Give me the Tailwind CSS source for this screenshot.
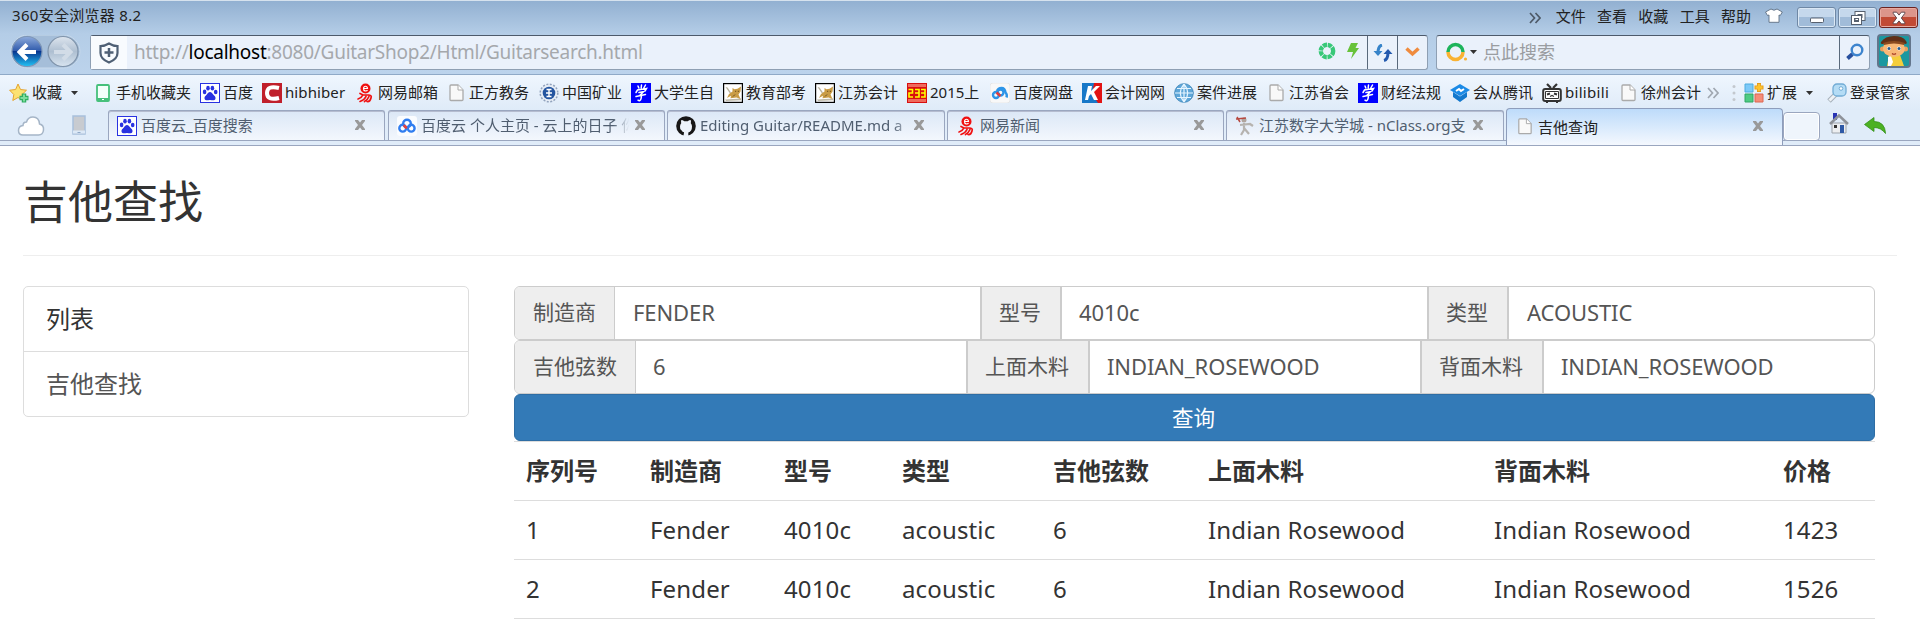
<!DOCTYPE html>
<html lang="zh-CN">
<head>
<meta charset="utf-8">
<title>吉他查询</title>
<script src="https://cdn.jsdelivr.net/npm/@tailwindcss/browser@4"></script>
</head>
<body class="h-[625px] w-[1920px] overflow-hidden bg-white font-['Noto_Sans','Noto_Sans_CJK_SC',sans-serif] text-[#333]">
<svg class="hidden">
  <symbol id="paw" viewBox="0 0 20 20"><path fill="#2932e1" d="M0 0h20v20H0z"/><path fill="#fff" d="M1 1h18v18H1z"/><g fill="#2932e1"><ellipse cx="4.6" cy="8.9" rx="1.8" ry="2.3"/><ellipse cx="8" cy="5.2" rx="1.8" ry="2.4"/><ellipse cx="12.4" cy="5.2" rx="1.8" ry="2.4"/><ellipse cx="15.7" cy="9" rx="1.8" ry="2.3"/><path d="M10 9c1.500 0 2 1.200 3.200 2.500s2.600 2 2.300 3.900c-.4 2-2.300 2.100-3.700 1.800a8 8 0 0 0-3.600 0c-1.500.3-3.300.1-3.700-1.800-.3-1.900 1.200-2.600 2.300-3.900S8.500 9 10 9z"/></g></symbol>
  <symbol id="doc" viewBox="0 0 20 20"><path fill="#f9f9f9" stroke="#aaa" stroke-width="1.300" d="M4 3q0-1 1-1h7l5 5v9.500q0 1-1 1H5q-1 0-1-1z"/><path fill="#fff" stroke="#aaa" d="M12 2v5h5"/></symbol>
  <symbol id="yi" viewBox="0 0 20 20"><circle cx="10.500" cy="5.500" r="5" fill="#f01010"/><path stroke="#fff" stroke-width="1.200" fill="none" d="M8.500 5.500h4c0-3-4-3-4 0s3 3 4 1.500"/><path d="M5 10.500l3 1.500h6q3 .3 2 3-1 4-4 3.500M7.500 12.500q-1 2.500-4.500 3.500M11 13.500q-1.500 3.500-6 5M14 13.500q-1.500 3.500-4.500 5" stroke="#f01010" stroke-width="1.700" fill="none" stroke-linecap="round"/></symbol>
  <symbol id="xue" viewBox="0 0 20 20"><path fill="#00f" d="M0 0h20v20H0z"/><path stroke="#fff" stroke-width="1.500" fill="none" stroke-linecap="round" d="M7 3l.8 2M10.500 2l-.3 3M14.500 2l-2 3.500M5 9.500l1.500-2.500 9-1.500-1.500 2.500M8 9.500l4.500-.8-3 3q1.500 1 .5 4-1 3-3 1.500M5 13.500l9.500-2"/></symbol>
  <symbol id="cat" viewBox="0 0 20 20"><path fill="#000" d="M0 0h20v20H0z"/><path fill="#fff" d="M1.200 1.200h17.600v17.600H1.200z"/><path fill="#bdb9a8" d="M2 16.500l16-1v1.800L3 18z"/><path fill="#b8b39f" d="M2.500 4l2 .5 3.500 5-1 1z"/><path fill="#c99c45" d="M9.500 5l2 1.200 3-.4L18 3.500l-.5 5-2 3 2 4.500-4-1.500-6 .8.5-2.500L4 15l2-4 3.500-2.500z"/><path stroke="#6b4e1e" d="M12 8.300h1.200m1.600 0H16M10 13.500l2-2" fill="none"/></symbol>
  <symbol id="cloudpan" viewBox="0 0 20 20"><rect width="20" height="20" rx="3" fill="#fafcff"/><g fill="none" stroke-width="2.400"><circle cx="10" cy="7.500" r="3.800" stroke="#2f7df0"/><circle cx="5.700" cy="12.200" r="3.400" stroke="#2f7df0"/><circle cx="14.200" cy="12.200" r="3.400" stroke="#2f7df0"/></g><path stroke="#e8413c" stroke-width="2.600" stroke-linecap="round" d="M7.500 10l1.500 1.500"/></symbol>
  <symbol id="close" viewBox="0 0 12 12"><path d="M1 1h3l2 2.500L8 1h3v1L8 6l3 4v1H8L6 8.500 4 11H1v-1l3-4-3-4z" fill="#999"/></symbol>
</svg>

<!-- browser chrome -->
<div class="flex h-[146px] flex-col bg-[#e0ecf9]">
  <div class="h-[74px] border-t border-[#d6e2ee] bg-linear-to-b from-[#92b0d1] via-[#b4cde7] via-45% to-[#bcd3ec]">
    <div class="flex h-[34px] justify-between text-[15px] leading-[15px] whitespace-nowrap text-[#222]">
      <div class="pt-[7px] pl-[12px] tracking-[0.3px]">360安全浏览器 8.2</div>
      <div class="flex pr-[2px]">
        <svg class="mt-[11px] mr-[15px] h-3 w-3" viewBox="0 0 12 12" fill="none" stroke="#4e5a68" stroke-width="1.700"><path d="M1 1l4.500 5L1 11M6.500 1L11 6l-4.500 5"/></svg>
        <div class="flex gap-[11.300px] pt-[8px]"><span>文件</span><span>查看</span><span>收藏</span><span>工具</span><span>帮助</span></div>
        <svg class="mt-[7px] ml-[14px] h-[15px] w-[18px]" viewBox="0 0 18 15"><path fill="#fff" stroke="#5d6f83" stroke-width=".9" d="M6 1q3 2.500 6 0l5.300 3-2 3.500L14 7v7.300H4V7l-1.500.5-2-3.500z"/></svg>
        <div class="mt-[6px] ml-[14px] flex h-[21px] gap-[2px]">
          <div class="grid w-[39px] place-items-center rounded-[3px] border border-[#6f88a5] bg-linear-to-b from-[#c5d8ec] from-50% to-[#a1bcd9] to-50% shadow-[inset_0_0_0_1px_#dbe8f5]"><svg class="h-4 w-4" viewBox="0 0 16 16"><rect x="1.500" y="8" width="13" height="4.500" rx="1" fill="#fff" stroke="#56606e"/></svg></div>
          <div class="grid w-[39px] place-items-center rounded-[3px] border border-[#6f88a5] bg-linear-to-b from-[#c5d8ec] from-50% to-[#a1bcd9] to-50% shadow-[inset_0_0_0_1px_#dbe8f5]"><svg class="h-4 w-4" viewBox="0 0 16 16" fill="none"><path stroke="#56606e" stroke-width="4" d="M6.500 3h7v6h-7z"/><path stroke="#fff" stroke-width="2" d="M6.500 3h7v6h-7z"/><path stroke="#56606e" stroke-width="4" d="M3 7h7v6H3z"/><path stroke="#fff" stroke-width="2" d="M3 7h7v6H3z"/></svg></div>
          <div class="grid w-[39px] place-items-center rounded-[3px] border border-[#6b2320] bg-linear-to-b from-[#dc958b] from-50% to-[#c14a35] to-50% shadow-[inset_0_0_0_1px_#e8aaa0]"><svg class="h-[14px] w-[14px]" viewBox="0 0 12 12"><path d="M1 1h3l2 2.500L8 1h3v1L8 6l3 4v1H8L6 8.500 4 11H1v-1l3-4-3-4z" fill="#fff" stroke="#584349" stroke-width=".8"/></svg></div>
        </div>
      </div>
    </div>
    <div class="flex h-[35px]">
      <svg class="h-[35px] w-[90px]" viewBox="0 0 90 35"><defs><linearGradient id="bl" x2="0" y2="1"><stop stop-color="#8eabdc"/><stop offset=".48" stop-color="#2f5aab"/><stop offset=".5" stop-color="#07358e"/><stop offset="1" stop-color="#22c3f5"/></linearGradient><linearGradient id="gr" x2="0" y2="1"><stop stop-color="#dde5ee"/><stop offset=".5" stop-color="#aebfd1"/><stop offset="1" stop-color="#d8e4f0"/></linearGradient></defs>
        <rect x="11" y="0" width="69" height="33" rx="16.500" fill="#a5bed9" stroke="#c8daec"/><circle cx="27" cy="16.500" r="15" fill="url(#bl)" stroke="#7d95b6" stroke-width="1.200"/><circle cx="63" cy="16.500" r="15" fill="url(#gr)" stroke="#7f93aa" stroke-width="1.200"/><path stroke="#fff" stroke-width="4" fill="none" d="M36 17H20m7-7.500L19.500 17l7.500 7.500"/><path stroke="#d2dce7" stroke-width="4" fill="none" d="M54 17h16m-7-7.500l7.500 7.500-7.500 7.500"/></svg>
      <div class="flex w-[1338px] rounded-[3px] border border-[#8e9fb3] border-t-[#4d5a6b] bg-[#eaf1fb]">
        <div class="grid w-[36px] place-items-center bg-[#f8fbfe]"><svg class="h-[22px] w-[22px]" viewBox="0 0 22 22" fill="none" stroke="#4f6075" stroke-width="2.200"><path d="M11 1.500q4 2.500 8.500 2.500v7q0 6-8.500 9.500Q2.500 17 2.500 11V4Q7 4 11 1.500z"/><path stroke-width="2.500" d="M11 6v9m-4.500-4.500h9"/></svg></div>
        <div class="grow pl-[7px] text-[19px] leading-[33px] tracking-[-0.26px] whitespace-nowrap text-[#a5a8ac]">http://<span class="text-black">localhost</span>:8080/GuitarShop2/Html/Guitarsearch.html</div>
        <svg class="mt-[6px] h-[18px] w-[18px]" viewBox="0 0 18 18"><circle cx="9" cy="9" r="6.200" fill="none" stroke="#38c878" stroke-width="4.400" stroke-dasharray="4.100 .77"/></svg>
        <svg class="mt-[6px] ml-[10px] h-[18px] w-[14px]" viewBox="0 0 14 18"><path fill="#67c23a" d="M5 1h7L9.500 6H13L5 17l2-7H1z"/></svg>
        <div class="ml-[7px] grid w-[30px] place-items-center border-l border-[#59697b]"><svg class="h-[18px] w-[20px]" viewBox="0 0 20 18"><path fill="none" stroke="#3683c9" stroke-width="3" d="M9 1Q5 2 5 9"/><path fill="#3683c9" d="M.5 7h9L5 12z"/><path fill="none" stroke="#2359ae" stroke-width="3" d="M11 16.500q4-1 4-8"/><path fill="#2359ae" d="M10.500 10h9L15 5z"/></svg></div>
        <div class="grid w-[30px] place-items-center border-l border-[#59697b]"><svg class="-mt-[2px] h-[10px] w-[15px]" viewBox="0 0 15 10"><path fill="none" stroke="#ef8b3e" stroke-width="3.500" d="M1.500 1.500l6 5.500 6-5.500"/></svg></div>
      </div>
      <div class="ml-[8px] flex w-[434px] rounded-[3px] border border-[#8e9fb3] border-t-[#4d5a6b] bg-[#eaf1fb]">
        <svg class="mt-[6px] ml-[9px] h-[20px] w-[22px]" viewBox="0 0 22 20" fill="none" stroke-width="3.500"><path stroke="#1db45b" d="M2 10a7.500 7.500 0 0 1 15 0"/><path stroke="#f9b233" d="M17 10a7.500 7.500 0 0 1-15 0"/><circle cx="19.500" cy="17" r="1.600" fill="#f9b233" stroke="none"/></svg>
        <svg class="mt-[14px] ml-[2px] h-[4px] w-[7px]" viewBox="0 0 7 4"><path d="M0 0h7L3.500 4z" fill="#333"/></svg>
        <div class="grow pl-[6px] text-[18px] leading-[32px] text-[#9a9da1]">点此搜索</div>
        <div class="grid w-[30px] place-items-center border-l border-[#59697b]"><svg class="-mt-[2px] h-[18px] w-[18px]" viewBox="0 0 18 18" fill="none"><path stroke="#274f9e" stroke-width="4" d="M1.500 15.500l5-4.500"/><circle cx="11" cy="7" r="5.300" stroke="#3d84ce" stroke-width="2.400"/></svg></div>
      </div>
      <svg class="-mt-px ml-[7px] h-[34px] w-[34px]" viewBox="0 0 34 34"><rect x="1" y="1" width="32" height="32" rx="3" fill="#1b98a0" stroke="#63758b" stroke-width="2"/><path fill="#f4ce3c" d="M10 32l2-11h11l4 11z"/><path fill="#fff" d="M11 23l3-1 2 6-2 4h-3z"/><circle cx="5.500" cy="15" r="2.500" fill="#e9a05e"/><circle cx="28.500" cy="15" r="2.500" fill="#e9a05e"/><ellipse cx="17" cy="14.500" rx="11" ry="8.500" fill="#f8b877"/><path fill="#613018" d="M4 8Q8 2 17 2t12 5q2 3-1 3-10-4-22 0-3 0-2-2z"/><path fill="#8a4a20" d="M6 9q11-4 22 0l-1 2q-10-3-20 0z"/><circle cx="12" cy="14.500" r="2" fill="#fff"/><circle cx="22" cy="14.500" r="2" fill="#fff"/><circle cx="12" cy="14.500" r="1.500" fill="#245b92"/><circle cx="22" cy="14.500" r="1.500" fill="#245b92"/><path stroke="#a43720" stroke-width="1.200" d="M15 19.500q2 1.500 4 0" fill="none"/></svg>
    </div>
  </div>

  <!-- bookmarks -->
  <div class="flex h-[36px] items-center border-t border-[#8fa9c7] bg-linear-to-b from-[#eff6fe] to-[#dfebf8] pl-[9px] text-[15px] leading-[19px] whitespace-nowrap text-[#222]">
    <div class="flex w-[84px] gap-[3px]"><svg class="h-5 w-5" viewBox="0 0 20 20"><path fill="#fce272" stroke="#e5a431" d="M9 1l2.500 5.500 6 .7-4.300 4.200 1 6L9 14.500 3.800 17.500l1-6L.6 7.200l6-.7z"/><path stroke="#2fae60" stroke-width="4.500" d="M15 10.500v9M10.500 15h9"/><path stroke="#7ddc9c" stroke-width="2" d="M15 11.500v7M11.500 15h7"/></svg><span>收藏</span><svg class="mt-[8px] ml-[6px] h-[4px] w-[7px]" viewBox="0 0 7 4"><path d="M0 0h7L3.500 4z" fill="#333"/></svg></div>
    <div class="flex w-[107px] gap-[3px]"><svg class="h-5 w-5" viewBox="0 0 20 20"><rect x="4" y="2" width="12" height="16" rx="1" fill="#f4fffa" stroke="#46c07b" stroke-width="1.800"/><path stroke="#46c07b" stroke-width="3" d="M4 16.500h12"/><path stroke="#fff" d="M9 16.500h2"/></svg><span>手机收藏夹</span></div>
    <div class="flex w-[62px] gap-[3px]"><svg class="h-5 w-5"><use href="#paw"/></svg><span>百度</span></div>
    <div class="flex w-[93px] gap-[3px]"><svg class="h-5 w-5" viewBox="0 0 20 20"><path fill="#c01f2b" d="M0 0h20v20H0z"/><path fill="none" stroke="#fff" stroke-width="4" d="M17 5Q5 2 5 10t12 5"/></svg><span class="tracking-[0.1px]">hibhiber</span></div>
    <div class="flex w-[91px] gap-[3px]"><svg class="h-5 w-5"><use href="#yi"/></svg><span>网易邮箱</span></div>
    <div class="flex w-[93px] gap-[3px]"><svg class="h-5 w-5"><use href="#doc"/></svg><span>正方教务</span></div>
    <div class="flex w-[92px] gap-[3px]"><svg class="h-5 w-5" viewBox="0 0 20 20"><circle cx="10" cy="10" r="8.800" fill="#e8eef6" stroke="#92a3bd" stroke-width="1.500" stroke-dasharray="2 1.500"/><circle cx="10" cy="10" r="6.300" fill="#2455a0"/><path stroke="#fff" stroke-width="1.400" d="M7.500 6.500h5M10 6.500v7M7 10h6M7.500 13.500h5"/></svg><span>中国矿业</span></div>
    <div class="flex w-[92px] gap-[3px]"><svg class="h-5 w-5"><use href="#xue"/></svg><span>大学生自</span></div>
    <div class="flex w-[92px] gap-[3px]"><svg class="h-5 w-5"><use href="#cat"/></svg><span>教育部考</span></div>
    <div class="flex w-[92px] gap-[3px]"><svg class="h-5 w-5"><use href="#cat"/></svg><span>江苏会计</span></div>
    <div class="flex w-[83px] gap-[3px]"><svg class="h-5 w-5" viewBox="0 0 20 20"><path fill="#d80f0f" d="M0 0h20v20H0z"/><path fill="#ef6a5c" d="M1 1h18v3H1zM1 16h18v3H1z"/><path fill="none" stroke="#ff0" stroke-width="1.600" d="M1.500 6.500h4v3.500h-3.500v4h4M8 6.500h4v7.500H8m0-4h4M14 6.500h4v7.500h-4m0-4h4"/></svg><span>2015上</span></div>
    <div class="flex w-[92px] gap-[3px]"><svg class="h-5 w-5" viewBox="0 0 20 20"><rect width="20" height="20" rx="3" fill="#f8f8f8" stroke="#ddd" stroke-width=".6"/><g fill="none" stroke-width="2.400"><circle cx="6" cy="12" r="3" stroke="#2d95e8"/><path stroke="#2d95e8" d="M7 8q1-3 4.500-3t4 4.500q2 2 1 5"/><circle cx="10.500" cy="9.500" r="3" stroke="#2d95e8"/><path stroke="#e33d3d" d="M6.500 9.500l4 3.500"/></g></svg><span>百度网盘</span></div>
    <div class="flex w-[92px] gap-[3px]"><svg class="h-5 w-5" viewBox="0 0 20 20"><path fill="#1878c8" d="M0 0h20v20H0z"/><path fill="#e21414" d="M12 0h8v20h-4l-6-9z"/><path fill="#fff" d="M6 3h4l-1 5 5-5h4l-6 6 4 8h-4l-3-6-2 2-1 4H3z"/></svg><span>会计网网</span></div>
    <div class="flex w-[92px] gap-[3px]"><svg class="h-5 w-5" viewBox="0 0 20 20"><circle cx="10" cy="10" r="9.300" fill="#5ea6d8" stroke="#478dbe"/><path fill="none" stroke="#e6f5ff" stroke-width="1.200" d="M10 1v18M1 10h18M3 5.500h14M3 14.500h14M10 1Q2.500 10 10 19M10 1q7.500 9 0 18"/></svg><span>案件进展</span></div>
    <div class="flex w-[92px] gap-[3px]"><svg class="h-5 w-5"><use href="#doc"/></svg><span>江苏省会</span></div>
    <div class="flex w-[92px] gap-[3px]"><svg class="h-5 w-5"><use href="#xue"/></svg><span>财经法规</span></div>
    <div class="flex w-[92px] gap-[3px]"><svg class="h-5 w-5" viewBox="0 0 20 20"><path fill="#1b8ae6" d="M10 1l10 6-10 6L0 7z"/><path fill="#1378cd" d="M3 9l7 4.500L17 9v5l-7 5-7-5z"/><path stroke="#fff" stroke-width="2" fill="none" d="M6 8l3-2 2 2 3-2"/></svg><span>会从腾讯</span></div>
    <div class="flex w-[76px] gap-[3px]"><svg class="h-5 w-5" viewBox="0 0 20 20" fill="none" stroke="#333"><rect x="1.200" y="6" width="17.600" height="12" rx="2" fill="#fff" stroke-width="2"/><path stroke-width="1" d="M3.500 8.500h13v7h-13z"/><path stroke-width="2.200" d="M5 1l4 4M15 1l-4 4"/><path stroke-width="2" d="M5 11.500l3-1M15 11.500l-3-1"/><path stroke-width="1.200" d="M8 13.500l2-1 2 1M4 19.500h2m8 0h2"/></svg><span class="tracking-[0.300px]">bilibili</span></div>
    <div class="flex w-[89px] gap-[3px]"><svg class="h-5 w-5"><use href="#doc"/></svg><span>徐州会计</span></div>
    <svg class="h-3 w-3" viewBox="0 0 12 12" fill="none" stroke="#a0a7b0" stroke-width="1.700"><path d="M1 1l4.500 5L1 11M6.500 1L11 6l-4.500 5"/></svg>
    <svg class="ml-[13px] h-[18px] w-[4px]" viewBox="0 0 4 18" fill="#c3c8ce"><circle cx="2" cy="2.500" r="1.500"/><circle cx="2" cy="9" r="1.500"/><circle cx="2" cy="15.500" r="1.500"/></svg>
    <div class="ml-[8px] flex w-[83px] gap-[3px]"><svg class="h-5 w-5" viewBox="0 0 20 20"><path fill="#7cc9f8" stroke="#4dacdf" d="M1 1h8v8H1z"/><path fill="#4ecb83" stroke="#31a765" d="M1 11h8v8H1z"/><path fill="#f58d78" stroke="#dc6652" d="M11 11h8v8h-8z"/><path stroke="#e59b1a" stroke-width="4" d="M15 0v9M10.500 4.500h9"/><path stroke="#fcc32f" stroke-width="2.500" d="M15 1v7M11.500 4.500h7"/></svg><span>扩展</span><svg class="mt-[8px] ml-[6px] h-[4px] w-[7px]" viewBox="0 0 7 4"><path d="M0 0h7L3.500 4z" fill="#333"/></svg></div>
    <div class="flex gap-[3px]"><svg class="h-5 w-5" viewBox="0 0 20 20"><path stroke="#a5b0ba" stroke-width="5" d="M2 18l7-7"/><path stroke="#eef2f5" stroke-width="3" d="M2.500 17.500l7-7"/><rect x="6" y="1" width="13" height="12" rx="4" fill="#b4dcf5" stroke="#72acd5" stroke-width="1.300"/><circle cx="14" cy="5.500" r="1.800" fill="#fff" stroke="#72acd5"/></svg><span>登录管家</span></div>
  </div>

  <!-- tabs -->
  <div class="flex h-[36px] border-b border-[#9aa6bf] text-[15px] whitespace-nowrap text-[#505e70]">
    <div class="flex h-[31px] w-[108px] gap-[27px] border-b border-[#9aa6bf] pl-[17px]">
      <svg class="mt-[5px] h-[22px] w-[28px] shrink-0" viewBox="0 0 28 22"><path fill="#fff" stroke="#a5b5c7" stroke-width="1.500" d="M6 20Q1.500 20 1.500 15.500T6 10.500Q6 7 9.500 7 11 2 16 2q6 0 6.500 7 4.500 1 4 6-.5 5-5 5z"/></svg>
      <svg class="mt-[5px] h-[20px] w-[14px] shrink-0" viewBox="0 0 14 20"><path fill="#c8cbd0" stroke="#a8c0dc" stroke-width="1.500" d="M1 1h12v18H1z"/><path stroke="#dce9f7" stroke-width="3" d="M1 17h12"/><path stroke="#8fa9c8" d="M5.500 17.500h3"/></svg>
    </div>
    <div class="flex h-[31px] grow border-b border-[#9aa6bf]">
      <div class="flex h-full w-[277px] items-center rounded-t-[3px] border border-b-0 border-[#9aa6bf] bg-linear-to-b from-[#dbe7f6] to-[#f3f7fd] pl-[8px] shadow-[inset_0_1px_0_#b5bccf]"><svg class="mr-[4px] h-5 w-5"><use href="#paw"/></svg><span class="w-[213px]">百度云_百度搜索</span><svg class="mb-px h-3 w-3"><use href="#close"/></svg></div>
      <div class="ml-[3px] flex h-full w-[277px] items-center rounded-t-[3px] border border-b-0 border-[#9aa6bf] bg-linear-to-b from-[#dbe7f6] to-[#f3f7fd] pl-[8px] shadow-[inset_0_1px_0_#b5bccf]"><svg class="mr-[4px] h-5 w-5"><use href="#cloudpan"/></svg><span class="mr-[3px] w-[210px] mask-r-from-[192px] mask-r-to-[208px]">百度云 个人主页 - 云上的日子 你</span><svg class="mb-px h-3 w-3 shrink-0"><use href="#close"/></svg></div>
      <div class="ml-[2px] flex h-full w-[278px] items-center rounded-t-[3px] border border-b-0 border-[#9aa6bf] bg-linear-to-b from-[#dbe7f6] to-[#f3f7fd] pl-[8px] shadow-[inset_0_1px_0_#b5bccf]"><svg class="mr-[4px] h-5 w-5" viewBox="0 0 20 20"><circle cx="10" cy="10" r="9.800" fill="#181717"/><path fill="#eef3fb" d="M7.700 20v-3.500Q4 15.500 4 10.500q0-2 1.200-3.200Q4.800 5.500 5.300 4q1.500 0 3 1.200h3.400Q13.200 4 14.700 4q.5 1.500.1 3.300Q16 8.500 16 10.500q0 5-3.700 6V20z"/><path stroke="#181717" stroke-width="1.500" fill="none" d="M3.500 14q1.500.3 2 1.600T8 17"/></svg><span class="mr-[3px] w-[210px] mask-r-from-[192px] mask-r-to-[215px]">Editing Guitar/README.md a</span><svg class="mb-px h-3 w-3 shrink-0"><use href="#close"/></svg></div>
      <div class="ml-[2px] flex h-full w-[277px] items-center rounded-t-[3px] border border-b-0 border-[#9aa6bf] bg-linear-to-b from-[#dbe7f6] to-[#f3f7fd] pl-[8px] shadow-[inset_0_1px_0_#b5bccf]"><svg class="mr-[4px] h-5 w-5"><use href="#yi"/></svg><span class="w-[213px]">网易新闻</span><svg class="mb-px h-3 w-3"><use href="#close"/></svg></div>
      <div class="ml-[2px] flex h-full w-[278px] items-center rounded-t-[3px] border border-b-0 border-[#9aa6bf] bg-linear-to-b from-[#dbe7f6] to-[#f3f7fd] pl-[8px] shadow-[inset_0_1px_0_#b5bccf]"><svg class="mr-[4px] h-5 w-5" viewBox="0 0 20 20" fill="none"><circle cx="9" cy="4" r="2.500" fill="#b0a59e"/><path stroke="#b74840" stroke-width="1.500" d="M1 3l10-1M2 1l3 5"/><path stroke="#b6b3af" stroke-width="2.200" d="M9 7v7l-3 5M9 12l5 6M5 9l10-1 3 2"/></svg><span class="mr-[3px] w-[210px]">江苏数字大学城 - nClass.org支</span><svg class="mb-px h-3 w-3 shrink-0"><use href="#close"/></svg></div>
      <div class="-mt-[2px] ml-[2px] flex h-[37px] w-[277px] rounded-t-[4px] border border-b-0 border-[#8e9dbb] bg-linear-to-b from-[#bddbfa] to-[#f4f8fe] pt-[6px] pl-[8px] text-[#222]"><svg class="mt-[2px] mr-[4px] h-[19px] w-[19px]"><use href="#doc"/></svg><span class="w-[214px] leading-[25px]">吉他查询</span><svg class="mt-[5px] h-3 w-3"><use href="#close"/></svg></div>
      <div class="mt-[2px] h-[29px] w-[37px] rounded-[4px] border border-[#9aa6bf] bg-[#eff5fc] shadow-[inset_0_0_0_1px_#fff]"></div>
      <svg class="mt-[3px] ml-[9px] h-[21px] w-[20px]" viewBox="0 0 20 21"><path fill="#2733b3" d="M4 0h4v7H4z"/><path fill="#eceef0" stroke="#9da3ab" d="M3 10h14v10H3z"/><path fill="none" stroke="#8e9299" stroke-width="2.500" d="M1 11l9-8.500L19 11"/><path fill="#2e59a6" d="M11 12h4v8h-4z"/><path fill="#333" d="M5 12h3v3H5z"/></svg>
      <svg class="mt-[7px] ml-[15px] h-[18px] w-[22px]" viewBox="0 0 22 18"><path fill="#4cb122" stroke="#34901a" stroke-width=".8" d="M.5 7.500L10 .500v4q11 0 11.500 12Q17 10.500 10 10.500v4z"/></svg>
    </div>
  </div>
</div>

<!-- page -->
<div class="pr-[23px] pl-[23px]">
  <h1 class="h-[110px] border-b border-[#eee] pt-[31px] text-[45px] leading-[50px] font-normal">吉他查找</h1>
  <div class="flex pt-[30px]">
    <div class="mr-[45px] h-[131px] w-[446px] rounded-[5px] border border-[#ddd] pl-[22px] text-[24px]">
      <div class="-ml-[22px] h-[65px] border-b border-[#ddd] pl-[22px] leading-[64px]">列表</div>
      <div class="leading-[64px] text-[#555]">吉他查找</div>
    </div>
    <div class="w-[1361px]">
      <div class="flex h-[54px] overflow-hidden rounded-[6px] border border-[#ccc] text-[21px] leading-[50px] text-[#555]">
        <div class="w-[100px] border-r border-[#ccc] bg-[#eee] pl-[18px]">制造商</div><div class="w-[365px] pl-[18px] text-[22px] tracking-[-0.1px]">FENDER</div>
        <div class="w-[82px] border-x-2 border-[#ccc] bg-[#eee] pl-[17px]">型号</div><div class="w-[365px] pl-[17px] text-[22px] tracking-[-0.1px]">4010c</div>
        <div class="w-[82px] border-x-2 border-[#ccc] bg-[#eee] pl-[17px]">类型</div><div class="pl-[18px] text-[22px] tracking-[-0.1px]">ACOUSTIC</div>
      </div>
      <div class="flex h-[54px] overflow-hidden rounded-[6px] border border-[#ccc] text-[21px] leading-[50px] text-[#555]">
        <div class="w-[121px] border-r border-[#ccc] bg-[#eee] pl-[18px]">吉他弦数</div><div class="w-[330px] pl-[17px] text-[22px]">6</div>
        <div class="w-[124px] border-x-2 border-[#ccc] bg-[#eee] pl-[17px]">上面木料</div><div class="w-[330px] pl-[17px] text-[22px] tracking-[-0.1px]">INDIAN_ROSEWOOD</div>
        <div class="w-[124px] border-x-2 border-[#ccc] bg-[#eee] pl-[17px]">背面木料</div><div class="pl-[17px] text-[22px] tracking-[-0.1px]">INDIAN_ROSEWOOD</div>
      </div>
      <button class="block h-[47px] w-full rounded-[6px] border border-[#2e6da4] bg-[#337ab7] pr-[2px] text-[21.500px] leading-[44px] text-white">查询</button>
      <table class="w-full table-fixed border-collapse text-left text-[24px] leading-[30px]">
        <colgroup><col class="w-[124px]"><col class="w-[134px]"><col class="w-[118px]"><col class="w-[151px]"><col class="w-[155px]"><col class="w-[286px]"><col class="w-[289px]"><col class="w-[104px]"></colgroup>
        <tr class="h-[59px] border-y border-[#ddd]"><th class="pl-[12px]">序列号</th><th class="pl-[12px]">制造商</th><th class="pl-[12px]">型号</th><th class="pl-[12px]">类型</th><th class="pl-[12px]">吉他弦数</th><th class="pl-[12px]">上面木料</th><th class="pl-[12px]">背面木料</th><th class="pl-[12px]">价格</th></tr>
        <tr class="h-[59px] border-b border-[#ddd] tracking-[0.14px]"><td class="pb-px pl-[12px]">1</td><td class="pb-px pl-[12px]">Fender</td><td class="pb-px pl-[12px]">4010c</td><td class="pb-px pl-[12px]">acoustic</td><td class="pb-px pl-[12px]">6</td><td class="pb-px pl-[12px]">Indian Rosewood</td><td class="pb-px pl-[12px]">Indian Rosewood</td><td class="pb-px pl-[12px]">1423</td></tr>
        <tr class="h-[59px] border-b border-[#ddd] tracking-[0.14px]"><td class="pb-px pl-[12px]">2</td><td class="pb-px pl-[12px]">Fender</td><td class="pb-px pl-[12px]">4010c</td><td class="pb-px pl-[12px]">acoustic</td><td class="pb-px pl-[12px]">6</td><td class="pb-px pl-[12px]">Indian Rosewood</td><td class="pb-px pl-[12px]">Indian Rosewood</td><td class="pb-px pl-[12px]">1526</td></tr>
      </table>
    </div>
  </div>
</div>
</body>
</html>
